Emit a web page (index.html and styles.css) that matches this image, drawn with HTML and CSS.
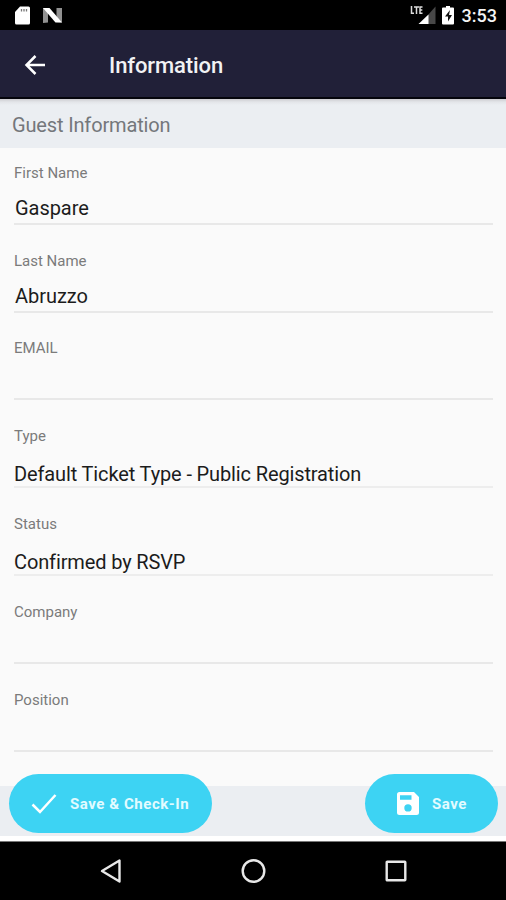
FILE: index.html
```html
<!DOCTYPE html>
<html lang="en">
<head>
<meta charset="utf-8">
<title>Information</title>
<link rel="stylesheet" href="styles.css">
</head>
<body>
<div class="screen">
  <div class="status-bar">
    <svg class="status-icons" width="50" height="30" viewBox="0 0 50 30">
      <path d="M6 6.500h8.500q1.500 0 1.500 1.500V23q0 1.500-1.500 1.500h-12Q1 24.500 1 23V12z" fill="#fff"/>
      <path d="M7.500 9v2.500M10 9v2.500M12.500 9v2.500" stroke="#777" stroke-width="1.300"/>
      <path d="M29 8h5v14.500l-5 .5zM42.500 8h5.500v14.500l-5.500-.5z" fill="#919191"/>
      <path d="M29 8h6.500L48 22.500h-6.500z" fill="#fff"/>
    </svg>
    <div class="status-right">
      <svg width="50" height="30" viewBox="0 0 50 30">
        <path d="M25.500 6.500V24H10z" fill="#484848"/>
        <path d="M18.500 14.500V24H8.500z" fill="#fff"/>
        <path d="M1.500 6v7.300H4M4 7h5M6.500 7v7M12.500 7H10v6.300h2.500M10 10h2.300" fill="none" stroke="#ddd" stroke-width="1.500"/>
        <path d="M33 7.500h3V6h4v1.500h3q1 0 1 1v15q0 1-1 1H33q-1 0-1-1v-15q0-1 1-1z" fill="#fff"/>
        <path d="M40 10L35 16.500h3v5l4-6.500h-3z" fill="#111"/>
      </svg>
      <span class="clock">3:53</span>
    </div>
  </div>
  <header class="app-bar">
    <svg width="22" height="22" viewBox="0 0 22 22" fill="none" stroke="#fff" stroke-width="2.500"><path d="M21 11H3M11.500 2L2.500 11l9 9"/></svg>
    <h1 class="title">Information</h1>
  </header>
  <main class="content">
    <h2 class="section-title">Guest Information</h2>
    <div class="form">
      <div class="field"><span class="label">First Name</span><div class="value">Gaspare</div></div>
      <div class="field"><span class="label">Last Name</span><div class="value">Abruzzo</div></div>
      <div class="field"><span class="label">EMAIL</span><div class="value"></div></div>
      <div class="field"><span class="label">Type</span><div class="value select">Default Ticket Type - Public Registration</div></div>
      <div class="field"><span class="label">Status</span><div class="value select">Confirmed by RSVP</div></div>
      <div class="field"><span class="label">Company</span><div class="value"></div></div>
      <div class="field"><span class="label">Position</span><div class="value"></div></div>
    </div>
    <div class="section-band"></div>
    <div class="actions">
      <div class="button check-in">
        <svg width="26" height="22" viewBox="0 0 26 22" fill="none" stroke="#fff" stroke-width="2.500"><path d="M1.500 11.500L9 19 24.500 2"/></svg>
        <span>Save &amp; Check-In</span>
      </div>
      <div class="button save">
        <svg width="22" height="23" viewBox="0 0 22 23"><path fill="#fff" fill-rule="evenodd" d="M2.500 0H17l5 5v15.500q0 2.500-2.500 2.500h-17Q0 23 0 20.500v-18Q0 0 2.500 0zM3 3.200v4.600h11.500V3.200zM11 12.200a3.700 3.700 0 1 0 0 7.400 3.700 3.700 0 0 0 0-7.400z"/></svg>
        <span>Save</span>
      </div>
    </div>
  </main>
  <nav class="nav-bar">
    <svg width="24" height="26" viewBox="0 0 24 26"><path d="M20.500 2.500v21L3 13z"/></svg>
    <svg width="26" height="26" viewBox="0 0 26 26"><circle cx="12.500" cy="13" r="10.800"/></svg>
    <svg width="24" height="26" viewBox="0 0 24 26"><rect x="2.700" y="3.700" width="18.600" height="18.600" rx=".5"/></svg>
  </nav>
</div>
</body>
</html>
```

FILE: styles.css
```css
* { box-sizing: border-box; }
body { margin: 0; font-family: Roboto, "Liberation Sans", sans-serif; background: #000; }
svg { display: block; flex: none; }
.screen { width: 506px; height: 900px; display: flex; flex-direction: column; overflow: hidden; }
.status-bar { height: 30px; flex: none; background: #000; display: flex; justify-content: space-between; padding: 0 9px 0 14px; }
.status-right { display: flex; gap: 2px; }
.clock { color: #f5f5f5; font-size: 18px; font-weight: 500; line-height: 32px; }
.app-bar { height: 69px; flex: none; background: #212038; border-bottom: 2px solid #05050c; display: flex; align-items: center; padding: 2px 0 0 24px; gap: 63px; }
.title { margin: 0; color: #f2f2f4; font-size: 22px; font-weight: 500; line-height: 30px; letter-spacing: -.1px; padding-top: 3px; }
.content { height: 743px; flex: none; background: #fff; border-bottom: 1px solid #777; position: relative; display: flex; flex-direction: column; }
.section-title { margin: 0; height: 49px; flex: none; padding-left: 12px; background: linear-gradient(#cdcdd1, #e3e5e9 3px, #ebeef2 6px); color: #74777b; font-size: 20px; font-weight: 400; line-height: 52px; letter-spacing: -.15px; }
.form { height: 638px; flex: none; background: #fafafa; padding: 14.800px 13px 0 14px; display: flex; flex-direction: column; gap: 25.800px; }
.field { height: 62px; flex: none; display: flex; flex-direction: column; }
.label { height: 20px; line-height: 20px; font-size: 15px; color: #7b7b7b; }
.value { height: 42px; border-bottom: 2px solid #e8e8e8; padding: 13px 0 0 1px; font-size: 20px; line-height: 24px; letter-spacing: -.05px; color: #1c1c1c; }
.select { padding: 16px 0 0; border-bottom-color: #ededed; letter-spacing: -.13px; }
.section-band { height: 50px; flex: none; background: #ebeef2; }
.actions { position: absolute; left: 9px; right: 8px; top: 675px; display: flex; justify-content: space-between; }
.button { height: 59px; border-radius: 30px; background: #3dd3f3; display: flex; align-items: center; color: #e2fbff; font-size: 15px; font-weight: 700; line-height: 20px; letter-spacing: .55px; white-space: nowrap; }
.check-in { width: 203px; padding-left: 22px; gap: 13px; }
.save { width: 133px; padding-left: 32px; gap: 13px; }
.nav-bar { height: 58px; flex: none; background: #000; display: flex; align-items: center; justify-content: space-between; padding: 0 98px 0 99px; }
.nav-bar svg { fill: none; stroke: #e8e8e8; stroke-width: 2.400; stroke-linejoin: round; }
```
